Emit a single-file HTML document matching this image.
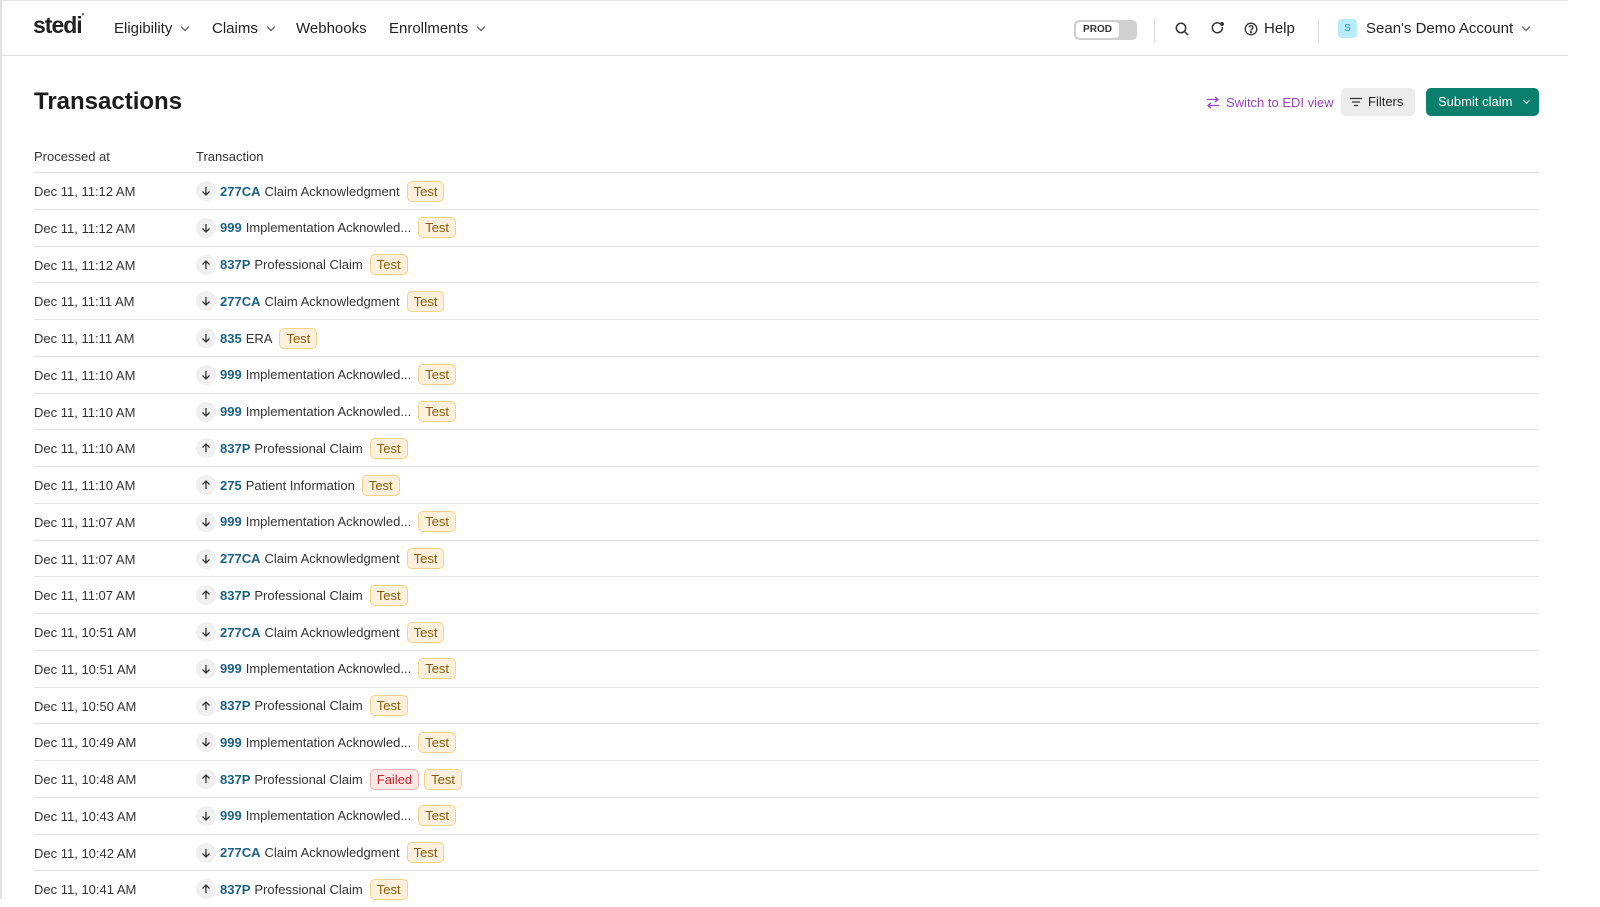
<!DOCTYPE html>
<html><head><style>
*{box-sizing:border-box;margin:0;padding:0}
body{width:1600px;height:899px;overflow:hidden;background:#fff;font-family:"Liberation Sans",sans-serif;color:#222;position:relative}
.frame{position:absolute;left:0;top:0;width:1568px;height:899px;border-left:2px solid #e2e2e2;border-top:1px solid #e6e6e6}
.nav{position:absolute;left:2px;top:1px;width:1566px;height:55px;border-bottom:1px solid #dedede}
.abs{position:absolute;white-space:nowrap}
.navi{font-size:15px;color:#222;top:19px}
.chev{display:inline-block;width:6px;height:6px;border-right:1.5px solid #444;border-bottom:1.5px solid #444;transform:rotate(45deg);margin-left:10px;position:relative;top:-3px}
h1{position:absolute;left:34px;top:88px;font-size:24px;font-weight:bold;color:#1c1c1c}
.th{position:absolute;top:149px;font-size:13px;color:#333}
.row{position:absolute;left:34px;width:1505px;height:36.75px;border-top:1px solid #e3e3e3;font-size:13px;color:#333}
.row .d{position:absolute;left:0;top:11px}
.row .t{position:absolute;left:162px;top:6px;display:flex;align-items:center;height:24px}
.ic{width:20px;height:20px;border-radius:50%;background:#f0f0f0;display:flex;align-items:center;justify-content:center;margin-right:4px}
.code{color:#1a6184;font-weight:bold;margin-right:4px}
.tag{font-size:13px;padding:2px 6px;border-radius:5px;margin-left:7px;border:1px solid #f1d38a;background:#fdf0dc;color:#8a5d08}
.tag.f{border-color:#f3b3b3;background:#fde8e8;color:#c4262e}
</style></head><body>
<div class="frame"></div>
<div class="nav">
<div class="abs" style="left:31px;top:11px;font-size:23px;font-weight:bold;letter-spacing:-1px;color:#222">stedi<span style="font-size:10px;vertical-align:top">'</span></div>
<div class="abs navi" style="left:112px">Eligibility<span class="chev"></span></div>
<div class="abs navi" style="left:210px">Claims<span class="chev"></span></div>
<div class="abs navi" style="left:294px">Webhooks</div>
<div class="abs navi" style="left:387px">Enrollments<span class="chev"></span></div>
<div class="abs" style="left:1072px;top:19px;width:63px;height:20px;border-radius:5px;background:#d0d0d0"><div style="position:absolute;left:2px;top:2px;width:43px;height:16px;background:#fff;border-radius:4px;font-size:10px;font-weight:bold;text-align:center;line-height:16px;color:#333">PROD</div></div>
<div class="abs" style="left:1152px;top:17px;width:1px;height:24px;background:#ddd"></div>
<svg class="abs" style="left:1173px;top:21px" width="14" height="14" viewBox="0 0 14 14" fill="none" stroke="#333" stroke-width="1.5"><circle cx="6" cy="6" r="4.7"/><path d="M9.5 9.5L13 13"/></svg>
<svg class="abs" style="left:1208px;top:20px" width="15" height="15" viewBox="0 0 15 15" fill="none" stroke="#333" stroke-width="1.5"><path d="M10 2.5A5 5 0 1 0 12.3 6"/><circle cx="12" cy="3" r="1.2" fill="#333"/></svg>
<svg class="abs" style="left:1242px;top:21px" width="14" height="14" viewBox="0 0 14 14" fill="none" stroke="#333" stroke-width="1.3"><circle cx="7" cy="7" r="5.8"/><path d="M5.3 5.4a1.8 1.8 0 1 1 2.4 1.7c-.5.2-.7.6-.7 1v.4"/><circle cx="7" cy="10.2" r=".5" fill="#333"/></svg>
<div class="abs navi" style="left:1262px">Help</div>
<div class="abs" style="left:1316px;top:17px;width:1px;height:24px;background:#ddd"></div>
<div class="abs" style="left:1336px;top:18px;width:19px;height:19px;border-radius:4px;background:#b8ecf9;color:#1d8fb8;font-size:10px;text-align:center;line-height:19px">S</div>
<div class="abs navi" style="left:1364px">Sean's Demo Account<span class="chev"></span></div>
</div>
<h1>Transactions</h1>
<svg class="abs" style="left:1206px;top:96px" width="14" height="13" viewBox="0 0 14 13" fill="none" stroke="#9b46b8" stroke-width="1.3"><path d="M1 3.5h11M9 1l3 2.5L9 6M13 9.5H2M5 7L2 9.5 5 12"/></svg>
<div class="abs" style="left:1226px;top:95px;font-size:13px;color:#9b46b8">Switch to EDI view</div>
<div class="abs" style="left:1341px;top:88px;width:74px;height:28px;border-radius:5px;background:#ececec;font-size:13px;line-height:28px;padding-left:27px;color:#222">Filters
<svg style="position:absolute;left:9px;top:9px" width="12" height="10" viewBox="0 0 12 10" stroke="#333" stroke-width="1.3"><path d="M0 1.5h12M2 5h8M4 8.5h4"/></svg></div>
<div class="abs" style="left:1426px;top:88px;width:113px;height:28px;border-radius:5px;background:#0b7f6d;font-size:13px;line-height:28px;padding-left:12px;color:#fff">Submit claim<span class="chev" style="border-color:#fff;width:5px;height:5px;margin-left:12px"></span></div>
<div class="th" style="left:34px">Processed at</div>
<div class="th" style="left:196px">Transaction</div>
<div id="rows"></div>
<script>
const D=[["11:12","d","277CA","Claim Acknowledgment"],["11:12","d","999","Implementation Acknowled..."],["11:12","u","837P","Professional Claim"],["11:11","d","277CA","Claim Acknowledgment"],["11:11","d","835","ERA"],["11:10","d","999","Implementation Acknowled..."],["11:10","d","999","Implementation Acknowled..."],["11:10","u","837P","Professional Claim"],["11:10","u","275","Patient Information"],["11:07","d","999","Implementation Acknowled..."],["11:07","d","277CA","Claim Acknowledgment"],["11:07","u","837P","Professional Claim"],["10:51","d","277CA","Claim Acknowledgment"],["10:51","d","999","Implementation Acknowled..."],["10:50","u","837P","Professional Claim"],["10:49","d","999","Implementation Acknowled..."],["10:48","u","837P","Professional Claim","F"],["10:43","d","999","Implementation Acknowled..."],["10:42","d","277CA","Claim Acknowledgment"],["10:41","u","837P","Professional Claim"]];
let h="";D.forEach((r,i)=>{const y=172+i*36.75;const p=r[1]=="d"?"M5 1v8M1.5 5.5L5 9l3.5-3.5":"M5 9V1M1.5 4.5L5 1l3.5 3.5";
h+=`<div class="row" style="top:${y}px"><div class="d">Dec 11, ${r[0]} AM</div><div class="t"><span class="ic"><svg width="10" height="10" viewBox="0 0 10 10" fill="none" stroke="#333" stroke-width="1.3"><path d="${p}"/></svg></span><span class="code">${r[2]}</span>${r[3]}${r[4]?'<span class="tag f">Failed</span>':''}<span class="tag" ${r[4]?'style="margin-left:5px"':''}>Test</span></div></div>`});
document.getElementById("rows").innerHTML=h;
</script>
</body></html>
